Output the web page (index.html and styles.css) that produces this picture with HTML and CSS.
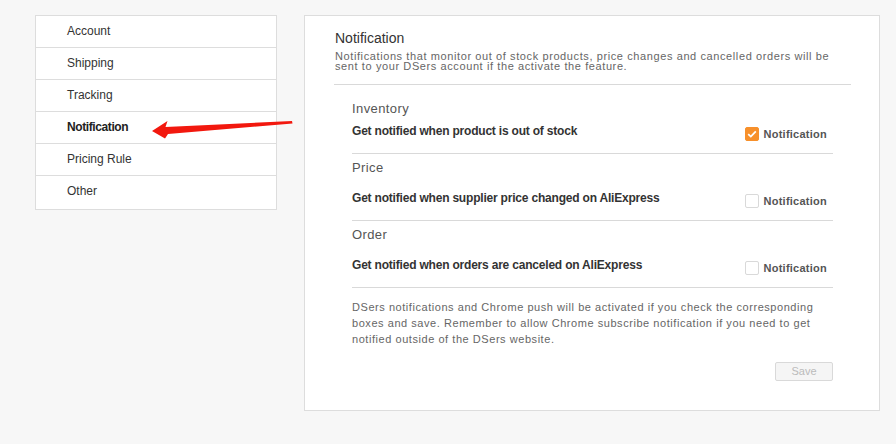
FILE: index.html
```
<!DOCTYPE html>
<html lang="en">
<head>
  <meta charset="UTF-8">
  <meta name="viewport" content="width=device-width, initial-scale=1.0">
  <title>Settings - Notification</title>
  <link rel="stylesheet" href="styles.css">
</head>
<body>
  <div class="page">
    <ul class="side-nav">
      <li>Account</li>
      <li>Shipping</li>
      <li>Tracking</li>
      <li class="active">Notification</li>
      <li>Pricing Rule</li>
      <li>Other</li>
    </ul>

    <div class="panel">
      <div class="panel-head">
        <h2>Notification</h2>
        <p class="desc">Notifications that monitor out of stock products, price changes and cancelled orders will be sent to your DSers account if the activate the feature.</p>
      </div>

      <div class="panel-body">
        <div class="section first">
          <h3>Inventory</h3>
          <div class="row">
            <span class="row-text">Get notified when product is out of stock</span>
            <label class="check">
              <span class="box checked">
                <svg width="10" height="8" viewBox="0 0 10 8"><path d="M1.2 4.2 L3.8 6.6 L8.8 1.4" fill="none" stroke="#fff" stroke-width="1.8"/></svg>
              </span>
              Notification
            </label>
          </div>
        </div>

        <div class="section">
          <h3>Price</h3>
          <div class="row">
            <span class="row-text">Get notified when supplier price changed on AliExpress</span>
            <label class="check"><span class="box"></span>Notification</label>
          </div>
        </div>

        <div class="section">
          <h3>Order</h3>
          <div class="row">
            <span class="row-text">Get notified when orders are canceled on AliExpress</span>
            <label class="check"><span class="box"></span>Notification</label>
          </div>
        </div>

        <p class="hint">DSers notifications and Chrome push will be activated if you check the corresponding boxes and save. Remember to allow Chrome subscribe notification if you need to get notified outside of the DSers website.</p>

        <div class="actions">
          <button class="btn-save" disabled>Save</button>
        </div>
      </div>
    </div>
  </div>

  <!-- annotation arrow drawn over the nav -->
  <svg class="arrow" width="145" height="24" viewBox="150 118 145 24">
    <path d="M152 131 L167.5 121 L165.5 127 L292 121 L292.5 123.5 L168 134 L165 138.5 Z" fill="#f2180e"/>
  </svg>
</body>
</html>
```

FILE: styles.css
```
body {
  margin: 0;
  background-color: #f7f7f7;
  font-family: "Liberation Sans", Arial, sans-serif;
  color: #333;
  position: relative;
}
.page {
  display: flex;
  align-items: flex-start;
  gap: 27px;
  padding: 15px 0 0 35px;
}
.side-nav {
  list-style: none;
  margin: 0;
  padding: 0 0 2px;
  width: 242px;
  box-sizing: border-box;
  background: #fff;
  border: 1px solid #ddd;
}
.side-nav li {
  height: 31px;
  line-height: 31px;
  padding-left: 31px;
  font-size: 12px;
  color: #333;
  border-bottom: 1px solid #ddd;
}
.side-nav li:last-child {
  border-bottom: none;
}
.side-nav li.active {
  font-weight: bold;
  color: #222;
  letter-spacing: -0.4px;
}
.panel {
  width: 576px;
  box-sizing: border-box;
  background: #fff;
  border: 1px solid #ddd;
  padding: 14px 28px 29px 29px;
}
.panel-head {
  border-bottom: 1px solid #d9d9d9;
  padding-bottom: 13px;
}
.panel-head h2 {
  margin: 0;
  font-size: 14px;
  line-height: 16px;
  font-weight: normal;
  color: #333;
  padding-left: 1px;
}
.desc {
  margin: 5px 0 0;
  padding-left: 1px;
  font-size: 11px;
  line-height: 10px;
  color: #666;
  letter-spacing: 0.6px;
}
.panel-body {
  margin: 0 18px 0 18px;
}
.section {
  padding: 6px 0 12px;
  border-bottom: 1px solid #d9d9d9;
}
.section.first {
  padding-top: 16px;
}
.section h3 {
  margin: 0;
  font-size: 13px;
  line-height: 16px;
  font-weight: normal;
  color: #555;
  letter-spacing: 0.4px;
}
.row {
  display: flex;
  justify-content: space-between;
  align-items: flex-start;
  margin-top: 15px;
}
.section.first .row {
  margin-top: 7px;
}
.row-text {
  font-size: 12px;
  line-height: 14px;
  font-weight: bold;
  color: #333;
  letter-spacing: -0.2px;
}
.check {
  display: flex;
  align-items: center;
  gap: 5px;
  margin-top: 3px;
  margin-right: 6px;
  font-size: 11px;
  line-height: 14px;
  font-weight: bold;
  color: #555;
  letter-spacing: 0.25px;
}
.box {
  width: 14px;
  height: 14px;
  box-sizing: border-box;
  border: 1px solid #d9d9d9;
  border-radius: 2px;
  background: #fff;
  display: flex;
  align-items: center;
  justify-content: center;
}
.box.checked {
  background: #f7902b;
  border-color: #f7902b;
}
.hint {
  margin: 11px 0 0;
  font-size: 11px;
  line-height: 16px;
  color: #666;
  letter-spacing: 0.55px;
}
.actions {
  text-align: right;
  margin-top: 14px;
}
.btn-save {
  width: 58px;
  height: 19px;
  padding: 0;
  font-family: inherit;
  font-size: 11px;
  color: #bbb;
  background: #f5f5f5;
  border: 1px solid #d9d9d9;
  border-radius: 2px;
}
.arrow {
  position: absolute;
  left: 150px;
  top: 118px;
}
```
